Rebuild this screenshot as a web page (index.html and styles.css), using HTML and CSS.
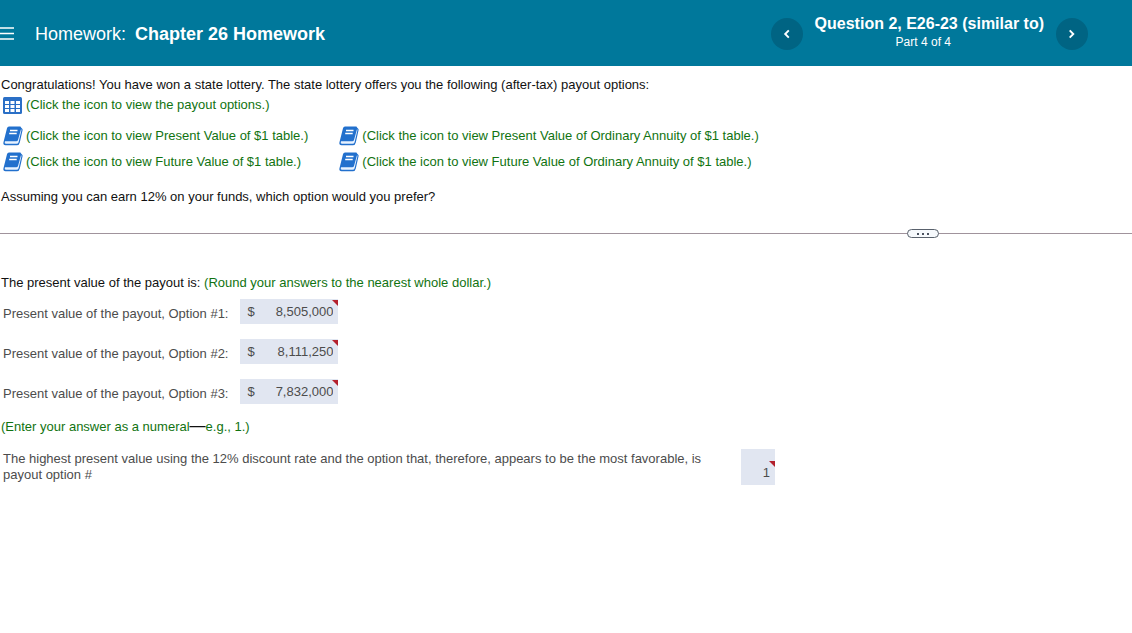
FILE: index.html
```
<!DOCTYPE html>
<html lang="en">

<head>
    <meta charset="UTF-8">
    <meta name="viewport" content="width=device-width, initial-scale=1.0">
    <title>Chapter 26 Homework</title>
    <link rel="stylesheet" href="styles.css">
</head>

<body>
    <!-- shared icons -->
    <svg class="symbols" aria-hidden="true">
        <symbol id="book" viewBox="0 0 20 20">
            <path d="M6 .5H17Q18 .5 18 1.5L19 2.5Q19.8 3 19.6 4L16.8 16.5Q16.2 19.3 13.8 19.3H2.5Q0 19.3 .4 16.6L4 2.2Q4.4 .5 6 .5Z" fill="#2270cd" />
            <path d="M2 15.3Q1.2 17.8 3 17.8H13.4Q15.2 17.8 15.6 16.2L18.6 3.6L17.9 3.4L15 13.9Q14.6 15.3 13.2 15.3Z" fill="#e8f2ff" />
            <path d="M7 4.5H14.5M6.2 7.5H13.7" stroke="#fff" stroke-width="1.3" />
        </symbol>
        <symbol id="grid" viewBox="0 0 20 20">
            <rect y="2" width="19" height="17" rx="1.5" fill="#2a6fc6" />
            <path d="M2 6h4v3H2zM7.500 6h4v3h-4zM13 6h4v3h-4zM2 10h4v3H2zM7.500 10h4v3h-4zM13 10h4v3h-4zM2 14h4v3H2zM7.500 14h4v3h-4zM13 14h4v3h-4z" fill="#fff" />
        </symbol>
    </svg>

    <header>
        <button type="button" class="menu" aria-label="Menu">
            <svg width="14" height="14" viewBox="0 0 14 14"><path d="M0 1h14M0 6.5h14M0 12h14" stroke="#fff" stroke-width="1.6" /></svg>
        </button>
        <h1>Homework: <b>Chapter 26 Homework</b></h1>
        <nav>
            <button type="button" class="arrow" aria-label="Previous question">
                <svg width="10" height="10" viewBox="0 0 10 10"><path d="M6.8 1.4L3.2 5L6.8 8.6" fill="none" stroke="#fff" stroke-width="1.9" /></svg>
            </button>
            <div class="question">
                <h2>Question 2, E26-23 (similar to)</h2>
                <p>Part 4 of 4</p>
            </div>
            <button type="button" class="arrow" aria-label="Next question">
                <svg width="10" height="10" viewBox="0 0 10 10"><path d="M2.7 1.4L6.3 5L2.7 8.6" fill="none" stroke="#fff" stroke-width="1.9" /></svg>
            </button>
        </nav>
    </header>

    <main>
        <section class="problem">
            <p>Congratulations! You have won a state lottery. The state lottery offers you the following (after-tax) payout options:</p>
            <a class="popup payout" href="#"><svg class="icon"><use href="#grid" /></svg>(Click the icon to view the payout options.)</a>
            <div class="tables">
                <a class="popup" href="#"><svg class="icon"><use href="#book" /></svg>(Click the icon to view Present Value of $1 table.)</a>
                <a class="popup" href="#"><svg class="icon"><use href="#book" /></svg>(Click the icon to view Present Value of Ordinary Annuity of $1 table.)</a>
                <a class="popup" href="#"><svg class="icon"><use href="#book" /></svg>(Click the icon to view Future Value of $1 table.)</a>
                <a class="popup" href="#"><svg class="icon"><use href="#book" /></svg>(Click the icon to view Future Value of Ordinary Annuity of $1 table.)</a>
            </div>
            <p>Assuming you can earn 12% on your funds, which option would you prefer?</p>
        </section>

        <div class="divider">
            <button type="button" class="handle" aria-label="Resize panels"><i></i><i></i><i></i></button>
        </div>

        <form class="answers">
            <p>The present value of the payout is: <span class="hint">(Round your answers to the nearest whole dollar.)</span></p>
            <div class="row">
                <label for="option1">Present value of the payout, Option #1:</label>
                <span class="box"><span>$</span><input type="text" id="option1" value="8,505,000"></span>
            </div>
            <div class="row">
                <label for="option2">Present value of the payout, Option #2:</label>
                <span class="box"><span>$</span><input type="text" id="option2" value="8,111,250"></span>
            </div>
            <div class="row">
                <label for="option3">Present value of the payout, Option #3:</label>
                <span class="box"><span>$</span><input type="text" id="option3" value="7,832,000"></span>
            </div>
            <p class="hint numeral">(Enter your answer as a numeral<span class="dash">—</span>e.g., 1.)</p>
            <div class="final">
                <label for="best">The highest present value using the 12% discount rate and the option that, therefore, appears to be the most favorable, is payout option #</label>
                <span class="box small"><input type="text" id="best" value="1"></span>
            </div>
        </form>
    </main>
</body>

</html>
```

FILE: styles.css
```
* {
    box-sizing: border-box;
}

body {
    font-family: "Liberation Sans", Arial, sans-serif;
    font-size: 13px;
    line-height: 16px;
    margin: 0;
    color: #111;
    background-color: #fff;
}

h1,
h2,
p {
    margin: 0;
}

button {
    padding: 0;
    border: none;
    cursor: pointer;
}

.symbols {
    display: none;
}

header {
    display: flex;
    align-items: center;
    height: 66px;
    padding: 2px 44px 0 0;
    background-color: #00789b;
    color: #fff;
}

header svg {
    display: block;
}

.menu {
    background: none;
    margin-right: 21px;
}

h1 {
    font-size: 18px;
    font-weight: normal;
    line-height: 24px;
}

h1 b {
    margin-left: 4px;
}

nav {
    display: flex;
    align-items: center;
    gap: 12px;
    margin-left: auto;
}

.arrow {
    display: flex;
    align-items: center;
    justify-content: center;
    width: 32px;
    height: 32px;
    border-radius: 50%;
    background-color: #006483;
}

.question {
    padding-bottom: 4px;
    text-align: center;
}

h2 {
    font-size: 16px;
    line-height: 20px;
}

.question p {
    padding-right: 12px;
    font-size: 12px;
}

.problem {
    padding: 11px 1px 0;
}

.popup {
    display: flex;
    align-items: center;
    gap: 3px;
    color: #117311;
    text-decoration: none;
}

.icon {
    width: 20px;
    height: 20px;
}

.payout {
    margin: 2px 0 11px 2px;
}

.tables {
    display: grid;
    grid-template-columns: max-content max-content;
    gap: 6px 31px;
    margin: 0 0 17px 2px;
}

.divider {
    display: flex;
    align-items: center;
    justify-content: flex-end;
    height: 9px;
    margin: 24px 0 37px;
    padding-right: 193px;
    background: linear-gradient(#a0939c, #a0939c) center / 100% 1px no-repeat;
}

.handle {
    display: flex;
    align-items: center;
    justify-content: center;
    gap: 3px;
    width: 32px;
    height: 9px;
    border: 1px solid #59616c;
    border-radius: 5px;
    background-color: #f6f9fc;
}

.handle i {
    width: 2px;
    height: 2px;
    background-color: #4b5360;
}

.answers {
    padding: 0 1px;
}

.hint {
    color: #117311;
}

.row {
    display: flex;
    align-items: center;
    gap: 12px;
    margin: 8px 2px 15px;
    color: #4c4c4c;
}

.row + .row {
    margin-top: 0;
}

.row label {
    padding-top: 4px;
}

.box {
    position: relative;
    display: flex;
    align-items: center;
    width: 98px;
    height: 25px;
    padding: 0 5px 0 7px;
    background-color: #e1e6f1;
    color: #4c4c4c;
}

/* red corner mark on graded answers */
.box::after {
    content: "";
    position: absolute;
    top: 1px;
    right: 0;
    border-top: 6px solid #b3202c;
    border-left: 6px solid transparent;
}

.box input {
    flex: 1;
    min-width: 0;
    padding: 0;
    border: none;
    background: none;
    font: inherit;
    color: inherit;
    text-align: right;
}

.numeral {
    margin-bottom: 14px;
}

.dash {
    color: #111;
    font-size: 16px;
    line-height: 0;
}

.final {
    display: flex;
    margin-left: 2px;
    gap: 28px;
    color: #4c4c4c;
}

.final label {
    flex: 0 1 710px;
    padding-top: 2px;
}

.small {
    width: 34px;
    height: 36px;
    align-items: flex-end;
    padding-bottom: 4px;
}

.small::after {
    top: 12px;
}
```
